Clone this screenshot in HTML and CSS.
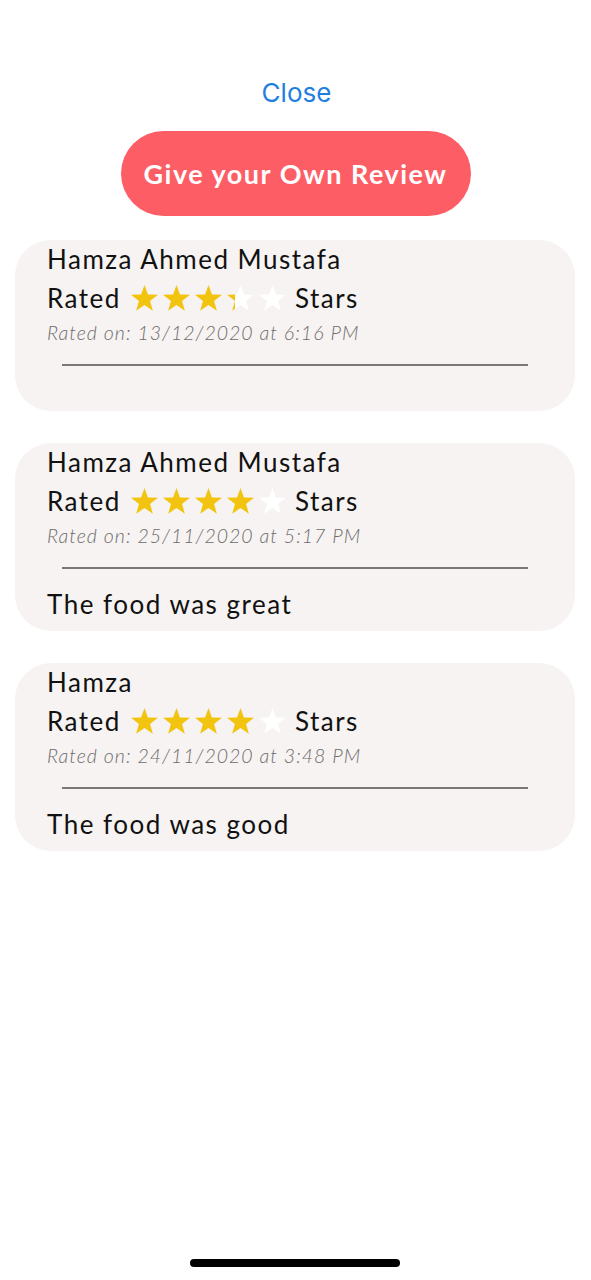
FILE: index.html
```html
<!DOCTYPE html>
<html lang="en">
<head>
<meta charset="utf-8">
<title>Reviews</title>
<link rel="stylesheet" href="styles.css">
</head>
<body>
<div class="page">
  <div class="close">Close</div>
  <div class="cta">Give your Own Review</div>
  <div class="reviews">
    <div class="card">
      <div class="name">Hamza Ahmed Mustafa</div>
      <div class="rated">
        <span>Rated</span>
        <span class="stars">
          <svg class="star" viewBox="0 0 24 23"><polygon class="on" points="12,0 15.06,8.4 23.98,8.71 16.95,14.2 19.41,22.79 12,17.8 4.59,22.79 7.05,14.2 0.02,8.71 8.94,8.4"/></svg>
          <svg class="star" viewBox="0 0 24 23"><polygon class="on" points="12,0 15.06,8.4 23.98,8.71 16.95,14.2 19.41,22.79 12,17.8 4.59,22.79 7.05,14.2 0.02,8.71 8.94,8.4"/></svg>
          <svg class="star" viewBox="0 0 24 23"><polygon class="on" points="12,0 15.06,8.4 23.98,8.71 16.95,14.2 19.41,22.79 12,17.8 4.59,22.79 7.05,14.2 0.02,8.71 8.94,8.4"/></svg>
          <svg class="star" viewBox="0 0 24 23"><defs><clipPath id="part1"><rect x="0" y="0" width="7" height="23"/></clipPath></defs><polygon class="off" points="12,0 15.06,8.4 23.98,8.71 16.95,14.2 19.41,22.79 12,17.8 4.59,22.79 7.05,14.2 0.02,8.71 8.94,8.4"/><polygon class="on" clip-path="url(#part1)" points="12,0 15.06,8.4 23.98,8.71 16.95,14.2 19.41,22.79 12,17.8 4.59,22.79 7.05,14.2 0.02,8.71 8.94,8.4"/></svg>
          <svg class="star" viewBox="0 0 24 23"><polygon class="off" points="12,0 15.06,8.4 23.98,8.71 16.95,14.2 19.41,22.79 12,17.8 4.59,22.79 7.05,14.2 0.02,8.71 8.94,8.4"/></svg>
        </span>
        <span>Stars</span>
      </div>
      <div class="date">Rated on: 13/12/2020 at 6:16 PM</div>
      <div class="rule"></div>
      <div class="comment empty"></div>
    </div>
    <div class="card">
      <div class="name">Hamza Ahmed Mustafa</div>
      <div class="rated">
        <span>Rated</span>
        <span class="stars">
          <svg class="star" viewBox="0 0 24 23"><polygon class="on" points="12,0 15.06,8.4 23.98,8.71 16.95,14.2 19.41,22.79 12,17.8 4.59,22.79 7.05,14.2 0.02,8.71 8.94,8.4"/></svg>
          <svg class="star" viewBox="0 0 24 23"><polygon class="on" points="12,0 15.06,8.4 23.98,8.71 16.95,14.2 19.41,22.79 12,17.8 4.59,22.79 7.05,14.2 0.02,8.71 8.94,8.4"/></svg>
          <svg class="star" viewBox="0 0 24 23"><polygon class="on" points="12,0 15.06,8.4 23.98,8.71 16.95,14.2 19.41,22.79 12,17.8 4.59,22.79 7.05,14.2 0.02,8.71 8.94,8.4"/></svg>
          <svg class="star" viewBox="0 0 24 23"><polygon class="on" points="12,0 15.06,8.4 23.98,8.71 16.95,14.2 19.41,22.79 12,17.8 4.59,22.79 7.05,14.2 0.02,8.71 8.94,8.4"/></svg>
          <svg class="star" viewBox="0 0 24 23"><polygon class="off" points="12,0 15.06,8.4 23.98,8.71 16.95,14.2 19.41,22.79 12,17.8 4.59,22.79 7.05,14.2 0.02,8.71 8.94,8.4"/></svg>
        </span>
        <span>Stars</span>
      </div>
      <div class="date">Rated on: 25/11/2020 at 5:17 PM</div>
      <div class="rule"></div>
      <div class="comment">The food was great</div>
    </div>
    <div class="card">
      <div class="name">Hamza</div>
      <div class="rated">
        <span>Rated</span>
        <span class="stars">
          <svg class="star" viewBox="0 0 24 23"><polygon class="on" points="12,0 15.06,8.4 23.98,8.71 16.95,14.2 19.41,22.79 12,17.8 4.59,22.79 7.05,14.2 0.02,8.71 8.94,8.4"/></svg>
          <svg class="star" viewBox="0 0 24 23"><polygon class="on" points="12,0 15.06,8.4 23.98,8.71 16.95,14.2 19.41,22.79 12,17.8 4.59,22.79 7.05,14.2 0.02,8.71 8.94,8.4"/></svg>
          <svg class="star" viewBox="0 0 24 23"><polygon class="on" points="12,0 15.06,8.4 23.98,8.71 16.95,14.2 19.41,22.79 12,17.8 4.59,22.79 7.05,14.2 0.02,8.71 8.94,8.4"/></svg>
          <svg class="star" viewBox="0 0 24 23"><polygon class="on" points="12,0 15.06,8.4 23.98,8.71 16.95,14.2 19.41,22.79 12,17.8 4.59,22.79 7.05,14.2 0.02,8.71 8.94,8.4"/></svg>
          <svg class="star" viewBox="0 0 24 23"><polygon class="off" points="12,0 15.06,8.4 23.98,8.71 16.95,14.2 19.41,22.79 12,17.8 4.59,22.79 7.05,14.2 0.02,8.71 8.94,8.4"/></svg>
        </span>
        <span>Stars</span>
      </div>
      <div class="date">Rated on: 24/11/2020 at 3:48 PM</div>
      <div class="rule"></div>
      <div class="comment">The food was good</div>
    </div>
  </div>
  <div class="home-indicator"></div>
</div>
</body>
</html>
```

FILE: styles.css
```css
html, body {
  margin: 0;
  padding: 0;
  background: #ffffff;
}

body {
  font-family: "Lato", "Noto Sans", sans-serif;
  color: #111111;
}

.page {
  position: relative;
  box-sizing: border-box;
  min-height: 1280px;
  padding-top: 78px;
  display: flex;
  flex-direction: column;
  align-items: center;
}

.close {
  font-family: "Inter", "Liberation Sans", sans-serif;
  font-size: 26px;
  line-height: 30px;
  color: #1f7fe1;
  margin-left: 2px;
}

.cta {
  margin-top: 23px;
  width: 350px;
  height: 85px;
  border-radius: 43px;
  background: #fd5e66;
  color: #ffffff;
  font-weight: 700;
  font-size: 27px;
  letter-spacing: 1.5px;
  display: flex;
  align-items: center;
  justify-content: center;
}

.reviews {
  align-self: stretch;
  margin-top: 24px;
  padding: 0 16px 0 15px;
  display: flex;
  flex-direction: column;
  gap: 32px;
}

.card {
  background: #f6f3f2;
  border-radius: 36px;
  padding: 0 32px 8px;
}

.name {
  font-size: 26px;
  line-height: 38px;
  letter-spacing: 1.5px;
}

.rated {
  display: flex;
  align-items: center;
  height: 40px;
  font-size: 26px;
  letter-spacing: 1.5px;
}

.stars {
  display: flex;
  gap: 5px;
  margin: 0 9px 0 10px;
}

.star {
  width: 27px;
  height: 26px;
  display: block;
}

.star .on {
  fill: #f2c40f;
}

.star .off {
  fill: #ffffff;
}

.date {
  font-style: italic;
  font-weight: 300;
  font-size: 19.5px;
  line-height: 29px;
  letter-spacing: 1px;
  color: #6e6c6c;
}

.rule {
  height: 2px;
  margin: 17px 15px 0;
  background: #7a7877;
}

.comment {
  margin-top: 16px;
  font-size: 26px;
  line-height: 38px;
  letter-spacing: 1.5px;
}

.comment.empty {
  height: 21px;
}

.home-indicator {
  position: absolute;
  top: 1259px;
  left: 190px;
  width: 210px;
  height: 8px;
  border-radius: 4px;
  background: #000000;
}
```
